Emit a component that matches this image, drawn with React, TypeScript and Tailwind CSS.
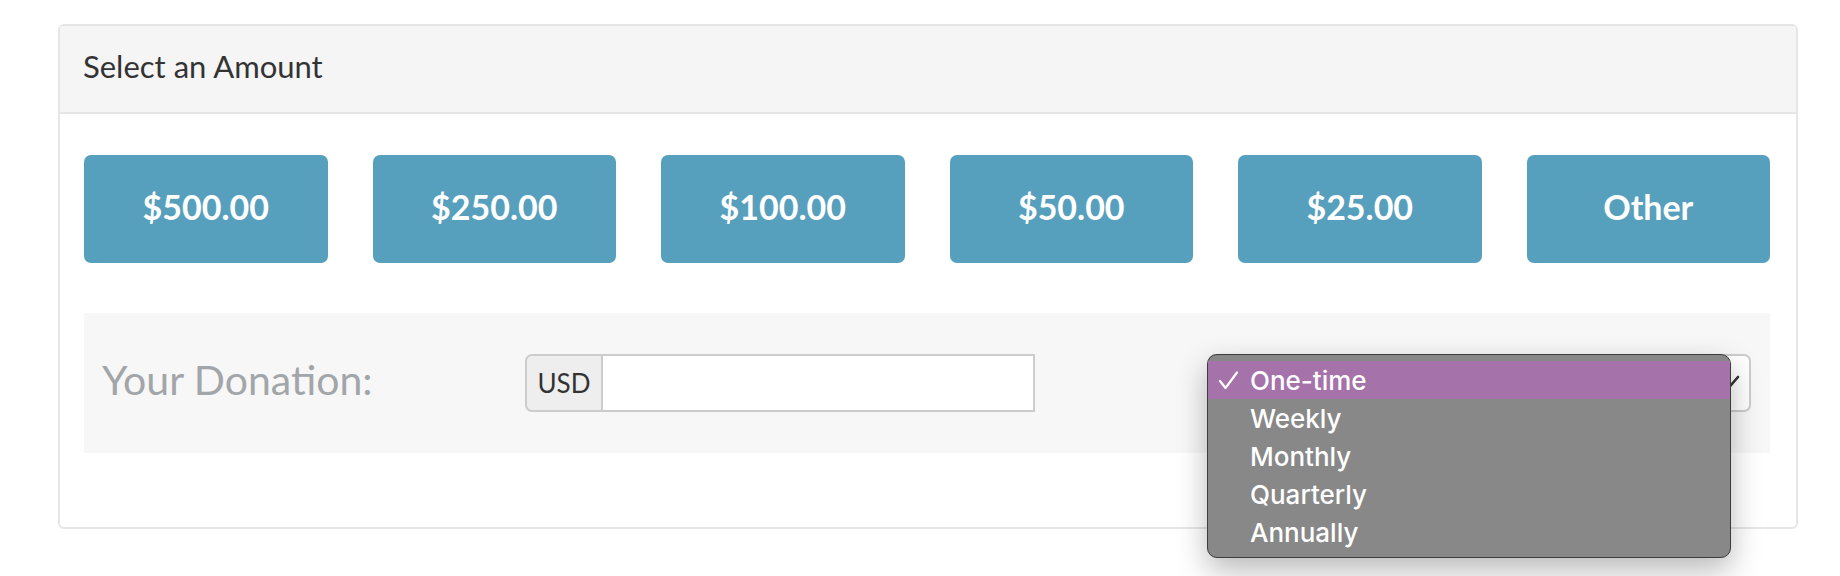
import React from 'react';

const amounts = ['$500.00', '$250.00', '$100.00', '$50.00', '$25.00', 'Other'];
const frequencies = ['One-time', 'Weekly', 'Monthly', 'Quarterly', 'Annually'];

function AmountButton({ label }: { label: string }) {
  return (
    <button className="h-[108px] rounded-[7px] bg-[#57a0bd] pb-[6px] text-[34px] font-bold text-white">
      {label}
    </button>
  );
}

function Check() {
  return (
    <svg width="21" height="19" viewBox="0 0 21 19" fill="none" className="ml-[10px]">
      <path d="M2 10 L7.5 17 L19 1.5" stroke="white" strokeWidth="2.2" strokeLinecap="round" strokeLinejoin="round" />
    </svg>
  );
}

function FrequencyMenu() {
  return (
    <div className="absolute left-[-3px] top-[-2px] z-10 w-[524px] rounded-[10px] border border-[#3d3d3d] bg-[#888888] py-[6px] font-['Inter',sans-serif] shadow-[0_12px_30px_rgba(0,0,0,0.28)]">
      {frequencies.map((f, i) => (
        <div
          key={f}
          className={
            i === 0
              ? 'flex h-[38px] items-center bg-[#a572aa] text-[26px] font-medium text-white'
              : 'flex h-[38px] items-center text-[26px] font-medium text-white'
          }
        >
          <span className="flex w-[42px] items-center">{i === 0 && <Check />}</span>
          {f}
        </div>
      ))}
    </div>
  );
}

export default function App() {
  return (
    <div className="min-h-[576px] bg-white pl-[58px] pt-[24px] font-['Lato',sans-serif]">
      <div className="w-[1740px] rounded-[6px] border-2 border-[#e6e6e6]">
        <div className="flex h-[88px] items-center border-b-2 border-[#e6e6e6] bg-[#f5f5f5] pb-[5px] pl-[23px] text-[31px] text-[#333]">
          Select an Amount
        </div>
        <div className="pl-6 pr-[26px] pt-[41px] pb-[74px]">
          <div className="grid grid-cols-6 gap-[45px]">
            {amounts.map((a) => (
              <AmountButton key={a} label={a} />
            ))}
          </div>
          <div className="mt-[50px] flex h-[140px] items-center bg-[#f7f7f7] pl-[18px] pr-[19px]">
            <span className="w-[423px] pb-[6px] text-[41px] text-[#a2a6a9]">Your Donation:</span>
            <div className="flex h-[58px] w-[510px]">
              <span className="flex w-[78px] items-center justify-center rounded-l-[7px] border-2 border-[#cccccc] bg-[#eeeeee] text-[26px] text-[#333]">
                USD
              </span>
              <input className="flex-1 border-y-2 border-r-2 border-[#cccccc] bg-white outline-none" />
            </div>
            <div className="relative ml-auto h-[58px] w-[543px] rounded-[7px] border-2 border-[#cccccc] bg-white">
              <svg width="18" height="14" viewBox="0 0 18 14" fill="none" className="absolute right-[9px] top-[18px]">
                <path d="M2 3 L9 11 L16 3" stroke="#333" strokeWidth="2.6" strokeLinecap="round" />
              </svg>
              <FrequencyMenu />
            </div>
          </div>
        </div>
      </div>
    </div>
  );
}
